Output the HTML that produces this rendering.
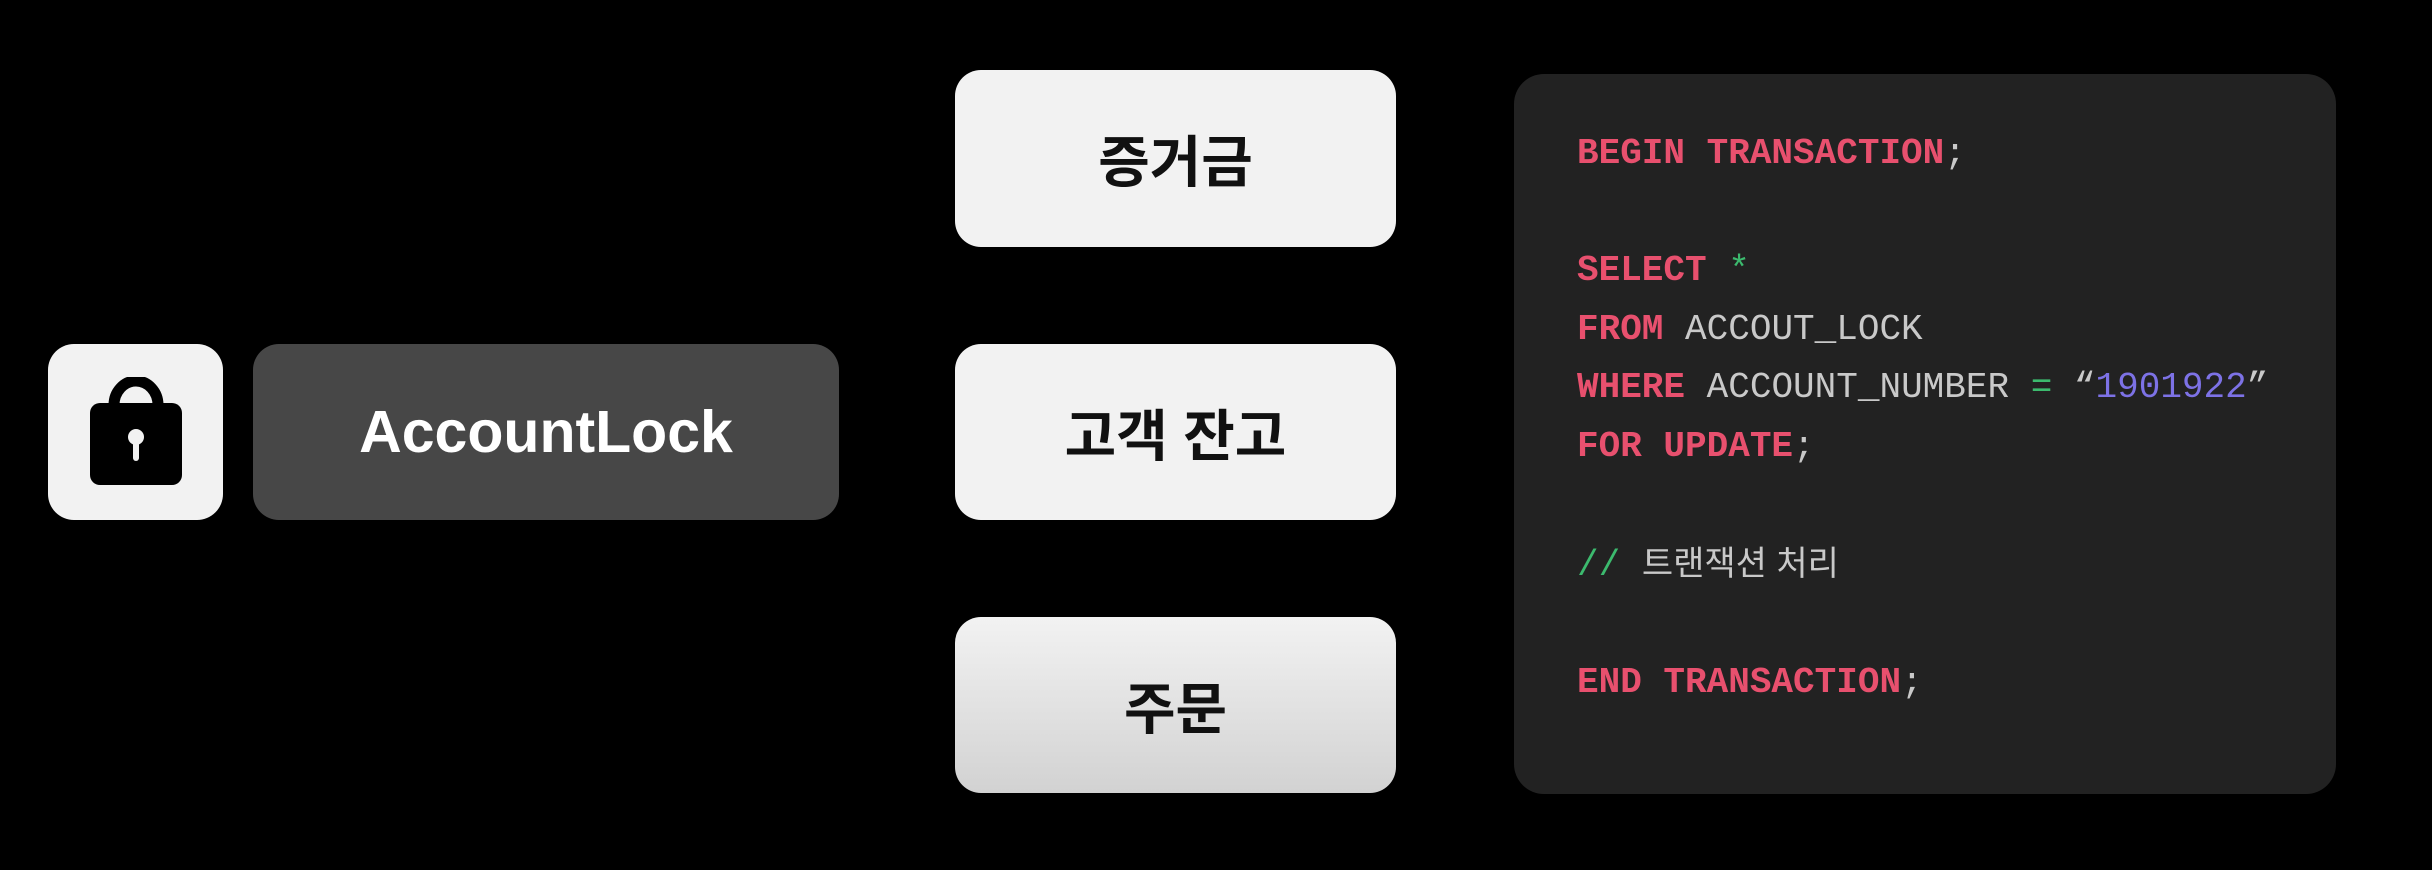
<!DOCTYPE html>
<html><head><meta charset="utf-8"><style>
body{margin:0;width:2432px;height:870px;background:#000;position:relative;overflow:hidden;font-family:"Liberation Sans","Noto Sans CJK KR",sans-serif}
.b{position:absolute;border-radius:26px;display:flex;align-items:center;justify-content:center}
.w{background:#f2f2f2;color:#111;font-weight:bold;font-size:56px;font-family:"Liberation Sans","Noto Sans CJK KR",sans-serif}
.code{position:absolute;left:1514px;top:74px;width:822px;height:720px;background:#222;border-radius:30px}
.lines{position:absolute;left:63px;top:51px;font-family:"Liberation Mono","Noto Sans CJK KR",monospace;font-size:36px;line-height:58.5px;color:#c9c9c9;white-space:pre}
.k{color:#e8506e;font-weight:bold}.g{color:#3cba6e}.p{color:#7d72e6}
.c{font-family:"Liberation Sans","Noto Sans CJK KR",sans-serif;font-size:34px}
</style></head><body>
<div class="b" style="left:48px;top:344px;width:175px;height:176px;background:#f2f2f2">
<svg width="96" height="110" viewBox="0 0 96 110"><path d="M26 34 V28 A22 24 0 0 1 70 28 V34" fill="none" stroke="#000" stroke-width="11"/><rect x="2" y="26" width="92" height="82" rx="10" fill="#000"/><circle cx="48" cy="60" r="8" fill="#f2f2f2"/><rect x="45" y="62" width="6" height="22" rx="3" fill="#f2f2f2"/></svg>
</div>
<div class="b" style="left:253px;top:344px;width:586px;height:176px;background:#474747;color:#fff;font-size:59px;font-weight:bold">AccountLock</div>
<div class="b w" style="left:955px;top:70px;width:441px;height:177px">증거금</div>
<div class="b w" style="left:955px;top:344px;width:441px;height:176px">고객 잔고</div>
<div class="b w" style="left:955px;top:617px;width:441px;height:176px;background:linear-gradient(#f2f2f2,#d2d2d2)">주문</div>
<div class="code"><div class="lines"><span class="k">BEGIN TRANSACTION</span>;

<span class="k">SELECT</span> <span class="g">*</span>
<span class="k">FROM</span> ACCOUT_LOCK
<span class="k">WHERE</span> ACCOUNT_NUMBER <span class="g">=</span> “<span class="p">1901922</span>”
<span class="k">FOR UPDATE</span>;

<span class="g">//</span> <span class="c">트랜잭션 처리</span>

<span class="k">END TRANSACTION</span>;</div></div>
</body></html>
